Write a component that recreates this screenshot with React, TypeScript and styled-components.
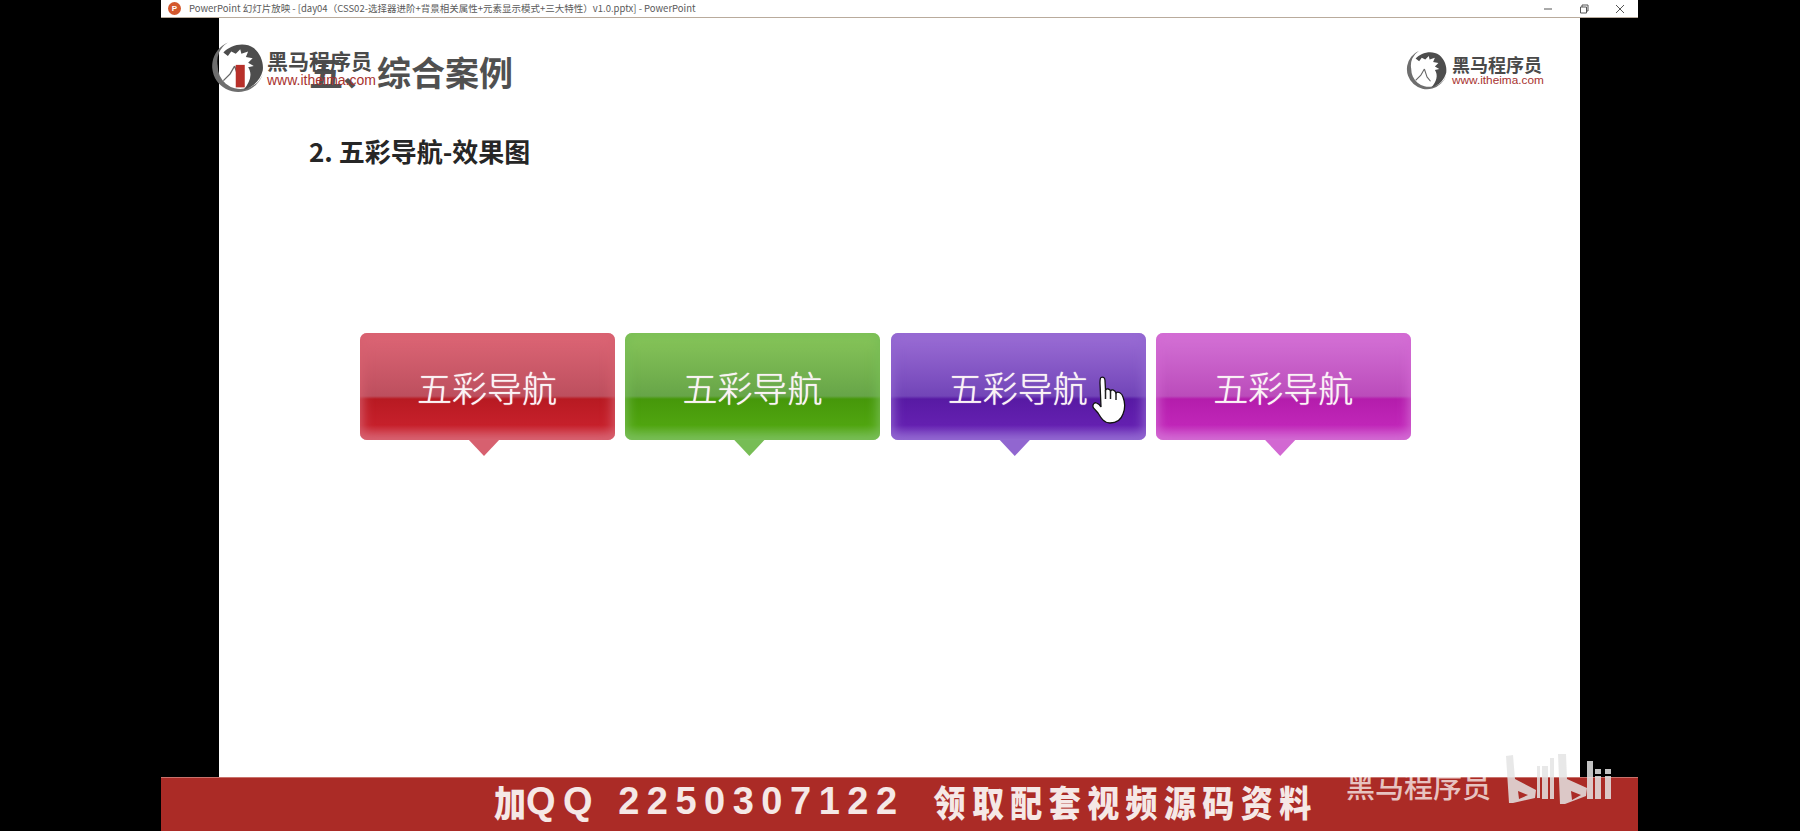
import React from 'react';
import styled, { createGlobalStyle } from 'styled-components';

const GlobalStyle = createGlobalStyle`
  html, body {
    margin: 0;
    padding: 0;
    background: #000;
  }

  body {
    font-family: "Noto Sans CJK SC", "Liberation Sans", sans-serif;
    overflow: hidden;
  }

  *, *:before, *:after {
    box-sizing: border-box;
  }
`;

const Screen = styled.div`
  width: 1800px;
  height: 831px;
  background: #000;
  padding-left: 161px;
`;

const Window = styled.div`
  width: 1477px;
  height: 831px;
  display: flex;
  flex-direction: column;
`;

const TitleBar = styled.div`
  height: 18px;
  flex: none;
  background: #fff;
  border-bottom: 1px solid #b9ab9c;
  display: flex;
  align-items: center;
  padding-left: 7px;
`;

const AppBadge = styled.div`
  width: 13px;
  height: 13px;
  border-radius: 50%;
  background: #d4572c;
  color: #fff;
  font: bold 8px/13px "Liberation Sans", sans-serif;
  text-align: center;
`;

const TitleText = styled.div`
  margin-left: 8px;
  font-size: 9.5px;
  line-height: 17px;
  color: #5a5a5a;
  white-space: nowrap;
`;

const WindowButtons = styled.div`
  margin-left: auto;
  display: flex;
  align-items: center;
  color: #555;
`;

const WindowButton = styled.div`
  width: 36px;
  height: 17px;
  display: flex;
  align-items: center;
  justify-content: center;
`;

const Slide = styled.div`
  position: relative;
  flex: 1;
  margin: 0 58px;
  background: #fff;
  padding: 32px 0 0 90px;
  min-height: 0;
`;

const Heading = styled.h1`
  margin: 0;
  font-size: 34px;
  line-height: 44px;
  font-weight: 700;
  color: #505050;
`;

const SubHeading = styled.h2`
  margin: 39px 0 0;
  font-size: 26px;
  line-height: 36px;
  font-weight: 700;
  color: #262626;
`;

const NavRow = styled.div`
  display: flex;
  gap: 10.4px;
  margin: 164px 0 0 51px;
`;

const NavItem = styled.div<{ $top: string; $mid: string; $low: string; $deep: string; $edge: string }>`
  position: relative;
  width: 255px;
  height: 107px;
  border-radius: 7px;
  display: flex;
  align-items: center;
  justify-content: center;
  padding: 0 1px 1px 0;
  color: #fbf3f5;
  font-size: 35px;
  font-weight: 300;
  text-shadow: 0 0 1px #fff;
  background: linear-gradient(
    to bottom,
    ${p => p.$top} 0,
    ${p => p.$mid} 63px,
    ${p => p.$low} 66px,
    ${p => p.$deep} 92px,
    ${p => p.$edge} 107px
  );
  box-shadow: inset 0 0 12px 2px ${p => p.$edge};

  &::after {
    content: '';
    position: absolute;
    left: 108px;
    top: 106px;
    width: 32px;
    height: 17px;
    background: ${p => p.$edge};
    clip-path: polygon(0 0, 100% 0, 50% 100%);
  }
`;

const LogoBlock = styled.div<{ $left: number; $top: number }>`
  position: absolute;
  left: ${p => p.$left}px;
  top: ${p => p.$top}px;
  display: flex;
  align-items: center;
`;

const LogoText = styled.div<{ $gap: number }>`
  margin-left: ${p => p.$gap}px;
  padding-top: 4px;
  display: flex;
  flex-direction: column;
`;

const LogoName = styled.div<{ $size: number }>`
  font-size: ${p => p.$size}px;
  line-height: ${p => p.$size + 2}px;
  font-weight: 700;
  color: #4a4a4a;
  white-space: nowrap;
`;

const LogoUrl = styled.div<{ $size: number }>`
  font: ${p => p.$size}px/${p => p.$size + 2}px "Liberation Sans", sans-serif;
  color: #a8322e;
  white-space: nowrap;
`;

const Cursor = styled.svg`
  position: absolute;
  left: 873px;
  top: 358px;
`;

const PromoBar = styled.div`
  position: relative;
  height: 54px;
  flex: none;
  background: #ab2b26;
  border-top: 1px solid #c9726c;
  display: flex;
  align-items: center;
  padding: 0 0 7px 333px;
  color: #f5e8e6;
  white-space: nowrap;
`;

const PromoCjk = styled.span<{ $spacing: number; $gap: number }>`
  display: inline-block;
  margin-left: ${p => p.$gap}px;
  font-size: 32px;
  letter-spacing: ${p => p.$spacing}px;
  font-weight: 900;
  transform: scaleY(1.15);
`;

const PromoLatin = styled.span`
  font: bold 38px/44px "Liberation Sans", sans-serif;
  letter-spacing: 7.5px;
`;

const Watermark = styled.div`
  position: absolute;
  left: 1185px;
  top: -9px;
  font-size: 29px;
  line-height: 32px;
  font-weight: 500;
  color: rgba(255, 255, 255, 0.72);
  white-space: nowrap;
`;

const BiliMark = styled.svg`
  position: absolute;
  left: 1319px;
  top: -32px;
`;

const navItems = [
  { $top: '#dd6676', $mid: '#bd4f5e', $low: '#b81a22', $deep: '#c6202b', $edge: '#d7606f' },
  { $top: '#88c65a', $mid: '#67a548', $low: '#46980a', $deep: '#50a510', $edge: '#77bd55' },
  { $top: '#9c6ed6', $mid: '#7245b8', $low: '#581aa4', $deep: '#6420b0', $edge: '#9166d0' },
  { $top: '#d472d6', $mid: '#bb4cbb', $low: '#b41dac', $deep: '#c026b8', $edge: '#d268d2' },
];

function HorseLogo({ size, marked }: { size: number; marked?: boolean }) {
  return (
    <svg width={size} height={size} viewBox="0 0 48 48">
      <path d="M15 3 A23 23 0 1 0 46 31 A21 20 0 0 1 30 44 A20 20 0 0 1 6 24 A20 20 0 0 1 15 3Z" fill="#6e6e6e" />
      <path d="M11 12 C17 5 30 2 38 8 C44 13 47 21 46 28 C44 36 38 43 29 45 C35 38 37 31 33 25 L38 24 L33 21 L37 17 L31 16 L33 11 L27 13 L26 9 L22 13 L18 11 L15 15Z" fill="#4d4d4d" />
      <path d="M21 24 L17 31 L11 37 M21 24 L24 33 L28 38" fill="none" stroke="#666" strokeWidth="1.2" />
      {marked && <rect x="22" y="23" width="8" height="20" fill="#b8302a" />}
    </svg>
  );
}

export default function App() {
  return (
    <>
      <GlobalStyle />
      <Screen>
        <Window>
          <TitleBar>
            <AppBadge>P</AppBadge>
            <TitleText>PowerPoint 幻灯片放映 - [day04（CSS02-选择器进阶+背景相关属性+元素显示模式+三大特性）v1.0.pptx] - PowerPoint</TitleText>
            <WindowButtons>
              <WindowButton>
                <svg width="10" height="10" viewBox="0 0 10 10"><path d="M1 5h8" stroke="currentColor" fill="none" /></svg>
              </WindowButton>
              <WindowButton>
                <svg width="10" height="10" viewBox="0 0 10 10"><path d="M1.5 3h6v6h-6zM3 3V1h6v6H7.5" stroke="currentColor" fill="none" /></svg>
              </WindowButton>
              <WindowButton>
                <svg width="10" height="10" viewBox="0 0 10 10"><path d="M1 1l8 8M9 1l-8 8" stroke="currentColor" fill="none" /></svg>
              </WindowButton>
            </WindowButtons>
          </TitleBar>
          <Slide>
            <Heading>五、综合案例</Heading>
            <SubHeading>2. 五彩导航-效果图</SubHeading>
            <NavRow>
              {navItems.map((item, i) => (
                <NavItem key={i} {...item}>五彩导航</NavItem>
              ))}
            </NavRow>
            <LogoBlock $left={-8} $top={21}>
              <HorseLogo size={54} marked />
              <LogoText $gap={2}>
                <LogoName $size={21}>黑马程序员</LogoName>
                <LogoUrl $size={14}>www.itheima.com</LogoUrl>
              </LogoText>
            </LogoBlock>
            <LogoBlock $left={1187} $top={30}>
              <HorseLogo size={42} />
              <LogoText $gap={4}>
                <LogoName $size={18}>黑马程序员</LogoName>
                <LogoUrl $size={11.8}>www.itheima.com</LogoUrl>
              </LogoText>
            </LogoBlock>
            <Cursor width="34" height="48" viewBox="0 0 34 48">
              <path d="M9 1.5 C11 .5 13 1.5 13 4.5 L13.5 14 C15 12 18 13 18.5 15 C20 13 23 14 24 17 C26 15 30 17 31 21 C33 26 33 33 31 38 C29 44 24 47 18 47 C12 47 9 42 6 37 L1.5 32 C0 29 2 26 4.5 27 C6 27.5 8 29 9 31 L8 7 C8 4 8 2 9 1.5Z" fill="#fff" stroke="#111" strokeWidth="1.3" />
              <path d="M13.5 14v9M18.5 15v8M24 17v7" stroke="#222" strokeWidth="1.5" fill="none" />
            </Cursor>
          </Slide>
          <PromoBar>
            <PromoCjk $spacing={0} $gap={0}>加</PromoCjk>
            <PromoLatin>QQ 2250307122</PromoLatin>
            <PromoCjk $spacing={6.4} $gap={29}>领取配套视频源码资料</PromoCjk>
            <Watermark>黑马程序员</Watermark>
            <BiliMark width="140" height="70" viewBox="0 0 140 70">
              <g fill="rgba(228,228,228,0.85)" fillRule="evenodd">
                <path d="M26 10 L33 9 L35 33 L56 44 L55 52 L33 57 L29 57Z M38 45 L48 49 L39 53Z" />
                <path d="M57 20h3v32h-3zM62 20h6v33h-6zM70 12h4v41h-4z" />
                <path d="M78 8 L86 8 L87 33 L107 42 L106 50 L85 58 L80 58Z M91 45 L101 49 L92 54Z" />
                <path d="M107 15h6v38h-6zM115 30h6v23h-6zM115 23h6v5h-6zM125 30h6v23h-6zM125 23h6v5h-6z" />
              </g>
            </BiliMark>
          </PromoBar>
        </Window>
      </Screen>
    </>
  );
}
